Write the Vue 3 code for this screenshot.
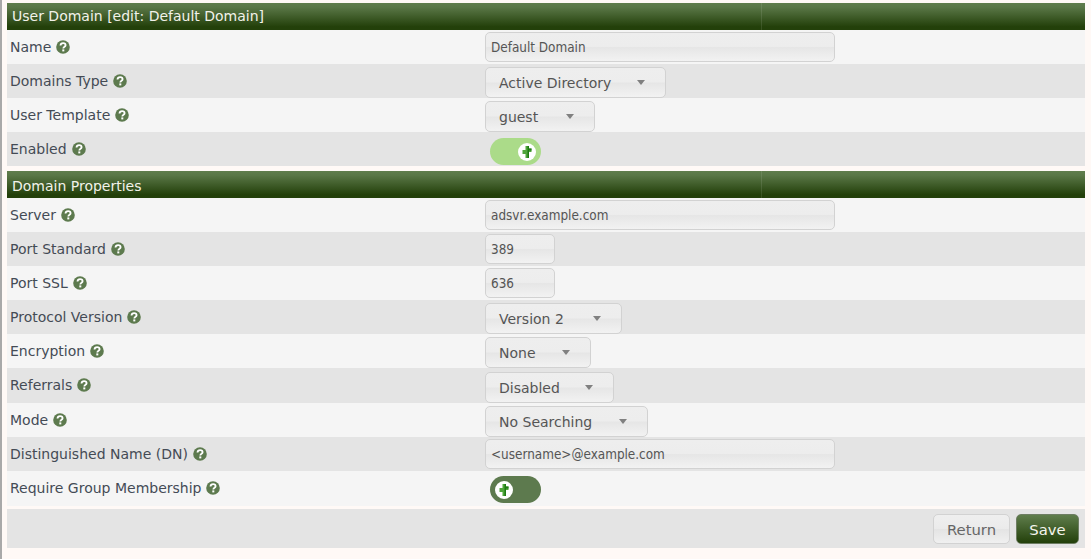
<script setup>
const domainRows = [
  { label: 'Name', type: 'input', value: 'Default Domain', width: 350 },
  { label: 'Domains Type', type: 'select', value: 'Active Directory', width: 181 },
  { label: 'User Template', type: 'select', value: 'guest', width: 110 },
  { label: 'Enabled', type: 'toggle', on: true }
]

const propertyRows = [
  { label: 'Server', type: 'input', value: 'adsvr.example.com', width: 350 },
  { label: 'Port Standard', type: 'input', value: '389', width: 70 },
  { label: 'Port SSL', type: 'input', value: '636', width: 70 },
  { label: 'Protocol Version', type: 'select', value: 'Version 2', width: 137 },
  { label: 'Encryption', type: 'select', value: 'None', width: 106 },
  { label: 'Referrals', type: 'select', value: 'Disabled', width: 129, tall: true },
  { label: 'Mode', type: 'select', value: 'No Searching', width: 163 },
  { label: 'Distinguished Name (DN)', type: 'input', value: '<username>@example.com', width: 350 },
  { label: 'Require Group Membership', type: 'toggle', on: false, big: true }
]

const sections = [
  { title: 'User Domain [edit: Default Domain]', rows: domainRows },
  { title: 'Domain Properties', rows: propertyRows }
]
</script>

<template>
  <div class="page">
    <section v-for="section in sections" :key="section.title" class="section">
      <div class="head">
        <div class="head-left">{{ section.title }}</div>
        <div class="head-right"></div>
      </div>
      <div
        v-for="row in section.rows"
        :key="row.label"
        class="row"
        :class="{ tall: row.tall, big: row.big }"
      >
        <div class="label">
          <span>{{ row.label }}</span>
          <svg class="help" width="14" height="14" viewBox="0 0 14 14">
            <circle cx="7" cy="7" r="6.8" fill="#5d7a4e" />
            <path d="M4.5 5.5C4.6 4 5.6 3.1 7.1 3.1C8.6 3.1 9.6 4 9.6 5.2C9.6 6.7 7.3 6.7 7.3 8.4" fill="none" stroke="#fff" stroke-width="1.8" />
            <rect x="6.3" y="9.4" width="2" height="2" fill="#fff" />
          </svg>
        </div>
        <div class="field">
          <div v-if="row.type === 'input'" class="ctl input" :style="{ width: row.width + 'px' }">{{ row.value }}</div>
          <div v-else-if="row.type === 'select'" class="ctl select" :style="{ width: row.width + 'px' }">
            <span>{{ row.value }}</span>
            <i class="caret"></i>
          </div>
          <div v-else class="toggle" :class="{ on: row.on }">
            <span class="knob">
              <svg width="12" height="14" viewBox="0 0 12 14">
                <path d="M4.5 1H8V3.5H10.5V7H8V13H4.5V9H1.5V5H4.5Z" fill="#4fa53a" />
                <path d="M6.5 1H8V3.5H10.5V5.5H8V13H6.5Z" fill="#1d7a12" />
              </svg>
            </span>
          </div>
        </div>
      </div>
    </section>
    <div class="actions">
      <button class="btn">Return</button>
      <button class="btn primary">Save</button>
    </div>
  </div>
</template>

<style>
html, body {
  background: #fff9f6;
}
</style>

<style scoped>
.page {
  box-sizing: border-box;
  width: 1085px;
  height: 559px;
  border-left: 2px solid #a9a9a9;
  padding: 3px 0 0 5px;
  font-family: "DejaVu Sans", Verdana, sans-serif;
  font-size: 14px;
  color: #444b55;
}

.section {
  margin-bottom: 5px;
}

.section + .section {
  margin-bottom: 3px;
}

.head {
  display: flex;
  height: 27px;
  background: linear-gradient(#5f7d4c, #5a7747 15%, #23400a 88%, #23400a);
  color: #f2f2ea;
  font-size: 14px;
  line-height: 26px;
}

.section + .section .head {
  line-height: 31px;
}

.head-left {
  width: 755px;
  padding-left: 5px;
  box-sizing: border-box;
  border-right: 1px solid rgba(255, 255, 255, 0.1);
}

.head-right {
  flex: 1;
}

.row {
  display: flex;
  height: 34px;
  background: #f5f5f5;
}

.row:nth-child(odd) {
  background: #e4e4e4;
}

.row.tall {
  height: 35px;
}

.row.big {
  height: 35px;
}

.label {
  width: 478px;
  padding-left: 3px;
  box-sizing: border-box;
  display: flex;
  align-items: center;
  gap: 5px;
  height: 34px;
}

.help {
  flex: none;
}

.field {
  display: flex;
  align-items: flex-start;
}

.ctl {
  box-sizing: border-box;
  border: 1px solid #d2d2d2;
  border-radius: 5px;
  background: linear-gradient(#eeeeee, #ededed 48%, #e6e6e6 52%, #f2f2f2);
  color: #555;
  display: flex;
  align-items: center;
}

.input {
  height: 30px;
  margin-top: 2px;
  padding: 1px 0 0 5px;
  font-family: "DejaVu Sans Condensed", "DejaVu Sans", sans-serif;
  font-stretch: condensed;
  font-size: 13.4px;
}

.select {
  height: 31px;
  margin-top: 3px;
  padding: 1px 20px 0 13px;
  justify-content: space-between;
}

.tall .select {
  margin-top: 4px;
}

.caret {
  width: 0;
  height: 0;
  margin-top: -1px;
  border-left: 4.5px solid transparent;
  border-right: 4.5px solid transparent;
  border-top: 5px solid #808080;
}

.toggle {
  margin: 6px 0 0 5px;
  width: 51px;
  height: 27px;
  border-radius: 14px;
  background: #5d7a4e;
  display: flex;
  align-items: center;
  padding: 0 5px;
  box-sizing: border-box;
}

.big .toggle {
  margin-top: 5px;
}

.toggle.on {
  background: #abdb89;
  justify-content: flex-end;
}

.knob {
  width: 18px;
  height: 18px;
  border-radius: 50%;
  background: #fff;
  display: flex;
  align-items: center;
  justify-content: center;
}

.actions {
  height: 39px;
  box-sizing: border-box;
  padding: 5px 6px 0 0;
  background: #e4e4e4;
  display: flex;
  justify-content: flex-end;
  align-items: flex-start;
  gap: 6px;
}

.btn {
  width: 77px;
  height: 30px;
  box-sizing: border-box;
  border: 1px solid #d2d2d2;
  border-radius: 5px;
  background: linear-gradient(#efefef, #ebebeb 48%, #e4e4e4 52%, #f0f0f0);
  color: #666;
  font-family: inherit;
  font-size: 14.8px;
  padding: 0;
}

.btn.primary {
  width: 63px;
  border-color: #6d7d62;
  background: linear-gradient(#5f7d4c, #23400a);
  color: #f5f5ee;
}
</style>
